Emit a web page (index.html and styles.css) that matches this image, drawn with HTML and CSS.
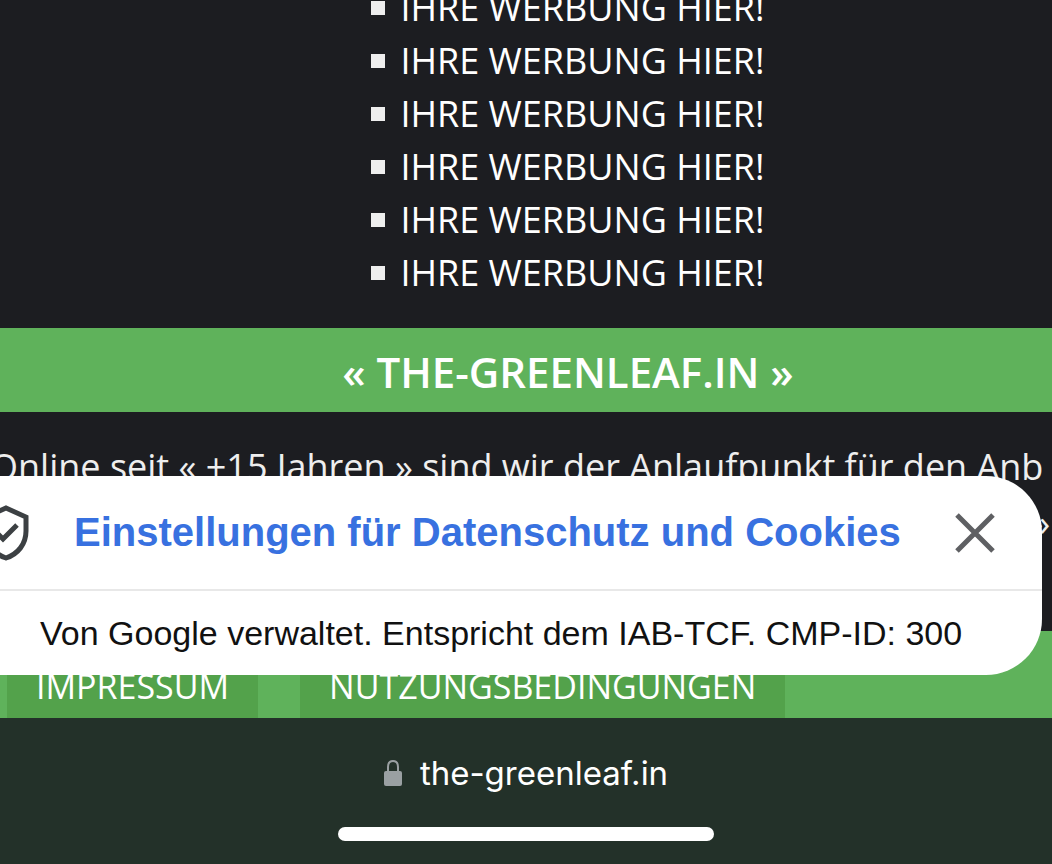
FILE: index.html
```html
<!DOCTYPE html>
<html lang="de">

<head>
    <meta charset="UTF-8">
    <meta name="viewport" content="width=device-width, initial-scale=1.0">
    <title>the-greenleaf.in</title>
    <link rel="stylesheet" href="styles.css">
</head>

<body>
    <main class="site">
        <section class="ads">
            <ul>
                <li>IHRE WERBUNG HIER!</li>
                <li>IHRE WERBUNG HIER!</li>
                <li>IHRE WERBUNG HIER!</li>
                <li>IHRE WERBUNG HIER!</li>
                <li>IHRE WERBUNG HIER!</li>
                <li>IHRE WERBUNG HIER!</li>
            </ul>
        </section>
        <h1 class="brand">« THE-GREENLEAF.IN »</h1>
        <section class="intro">
            <p>Online seit « +15 Jahren » sind wir der Anlaufpunkt für den Anb</p>
            <p class="intro-end">»</p>
        </section>
        <nav class="site-links">
            <a href="#impressum">IMPRESSUM</a>
            <a href="#nutzungsbedingungen">NUTZUNGSBEDINGUNGEN</a>
        </nav>
    </main>

    <!-- Consent message -->
    <aside class="consent">
        <div class="consent-header">
            <svg class="shield" viewBox="0 0 46 56" aria-hidden="true">
                <path d="M23 3 L43 12 V26 C43 39 35 49 23 53 C11 49 3 39 3 26 V12 Z" />
                <path d="M11 25 L20 34 L34 20" />
            </svg>
            <a class="consent-link" href="#datenschutz">Einstellungen für Datenschutz und Cookies</a>
            <button class="consent-close" type="button" aria-label="Schließen">
                <svg viewBox="0 0 40 40" aria-hidden="true">
                    <path d="M2 2 L38 38 M38 2 L2 38" />
                </svg>
            </button>
        </div>
        <p class="consent-note">Von Google verwaltet. Entspricht dem IAB-TCF. CMP-ID: 300</p>
    </aside>

    <!-- Browser address bar -->
    <footer class="address-bar">
        <div class="address">
            <svg class="lock" viewBox="0 0 18 26" aria-hidden="true">
                <path d="M4 13 V7 C4 3 6 1 9 1 C12 1 14 3 14 7 V13" />
                <rect x="0" y="11" width="18" height="15" rx="2" />
            </svg>
            <span>the-greenleaf.in</span>
        </div>
        <div class="home-indicator"></div>
    </footer>
</body>

</html>
```

FILE: styles.css
```css
* {
    box-sizing: border-box;
}

body {
    display: flex;
    flex-direction: column;
    height: 100vh;
    margin: 0;
    overflow: hidden;
    background-color: #1c1d21;
    color: #fff;
    font-family: "Open Sans", "Noto Sans", sans-serif;
    font-size: 36px;
}

p,
ul,
h1 {
    margin: 0;
    padding: 0;
}

a {
    color: inherit;
    text-decoration: none;
}

.site {
    display: flex;
    flex: 1;
    flex-direction: column;
    min-height: 0;
}

/* Ads */
.ads {
    display: flex;
    flex: 1;
    flex-direction: column;
    align-items: center;
    justify-content: flex-end;
    min-height: 0;
    padding: 0 0 29px 84px;
    overflow: hidden;
}

.ads ul {
    list-style: none;
}

.ads li {
    display: flex;
    align-items: center;
    gap: 15px;
    line-height: 53px;
}

.ads li::before {
    width: 14px;
    height: 14px;
    background-color: #eee;
    content: "";
}

.brand {
    padding: 4px 0 0 84px;
    background-color: #5fb25b;
    font-size: 42px;
    font-weight: 600;
    line-height: 80px;
    text-align: center;
}

.intro {
    height: 219px;
    padding-top: 27px;
    color: #eee;
    line-height: 56px;
    white-space: nowrap;
}

.intro p {
    margin: 0 2px 0 -10px;
}

.intro .intro-end {
    text-align: right;
}

.site-links {
    display: flex;
    gap: 42px;
    height: 87px;
    padding-left: 7px;
    background-color: #5fb25b;
    font-size: 34px;
    font-weight: 500;
    line-height: 110px;
}

.site-links a {
    padding: 0 29px;
    overflow: hidden;
    background-color: #53a24b;
}

/* Consent message */
.consent {
    position: fixed;
    right: 10px;
    bottom: 189px;
    left: -60px;
    border-radius: 56px;
    background-color: #fff;
    color: #111;
    font-family: "Liberation Sans", Arial, sans-serif;
}

.consent-header {
    display: flex;
    align-items: center;
    height: 115px;
    padding: 0 47px 0 43px;
    border-bottom: 2px solid #e8e8e8;
}

.shield {
    width: 46px;
    height: 56px;
    fill: none;
    stroke: #3c4043;
    stroke-width: 5;
}

.consent-link {
    flex: 1;
    margin-left: 45px;
    color: #3871e0;
    font-size: 40px;
    font-weight: bold;
    white-space: nowrap;
}

.consent-close {
    width: 40px;
    height: 40px;
    padding: 0;
    border: none;
    background: none;
    cursor: pointer;
}

.consent-close svg {
    display: block;
    fill: none;
    stroke: #5f6063;
    stroke-width: 5;
}

.consent-note {
    padding-left: 100px;
    font-size: 34px;
    line-height: 84px;
    white-space: nowrap;
}

/* Browser address bar */
.address-bar {
    display: flex;
    flex-direction: column;
    align-items: center;
    height: 146px;
    padding-top: 30px;
    background-color: #233129;
    font-family: Inter, Roboto, sans-serif;
    font-size: 33px;
    line-height: 50px;
}

.address {
    display: flex;
    align-items: center;
    gap: 18px;
}

.lock {
    width: 18px;
    height: 26px;
    fill: #9aa0a2;
}

.lock path {
    fill: none;
    stroke: #9aa0a2;
    stroke-width: 2;
}

.home-indicator {
    width: 376px;
    height: 14px;
    margin-top: 29px;
    border-radius: 7px;
    background-color: #fff;
}
```
